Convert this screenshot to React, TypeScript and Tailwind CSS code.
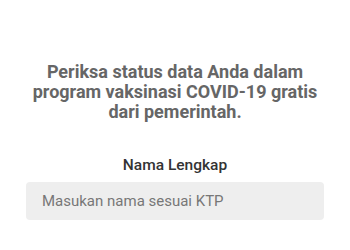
export default function App() {
  return (
    <div className="w-[350px] h-[250px] bg-white overflow-hidden" style={{ fontFamily: 'Roboto, "Liberation Sans", sans-serif' }}>
      <div className="pt-[62px] flex flex-col items-center">
        <h1 className="w-[300px] text-center text-[18px] leading-[20px] font-bold text-[#666666]">
          Periksa status data Anda dalam program vaksinasi COVID-19 gratis dari pemerintah.
        </h1>
        <label className="mt-[34px] text-[15.5px] leading-[18px] font-medium text-[#333333]">Nama Lengkap</label>
        <div className="mt-[8px] w-[298px] h-[38px] rounded bg-[#eeeeee] flex items-center px-4">
          <span className="text-[15px] text-[#777777]">Masukan nama sesuai KTP</span>
        </div>
      </div>
    </div>
  );
}
